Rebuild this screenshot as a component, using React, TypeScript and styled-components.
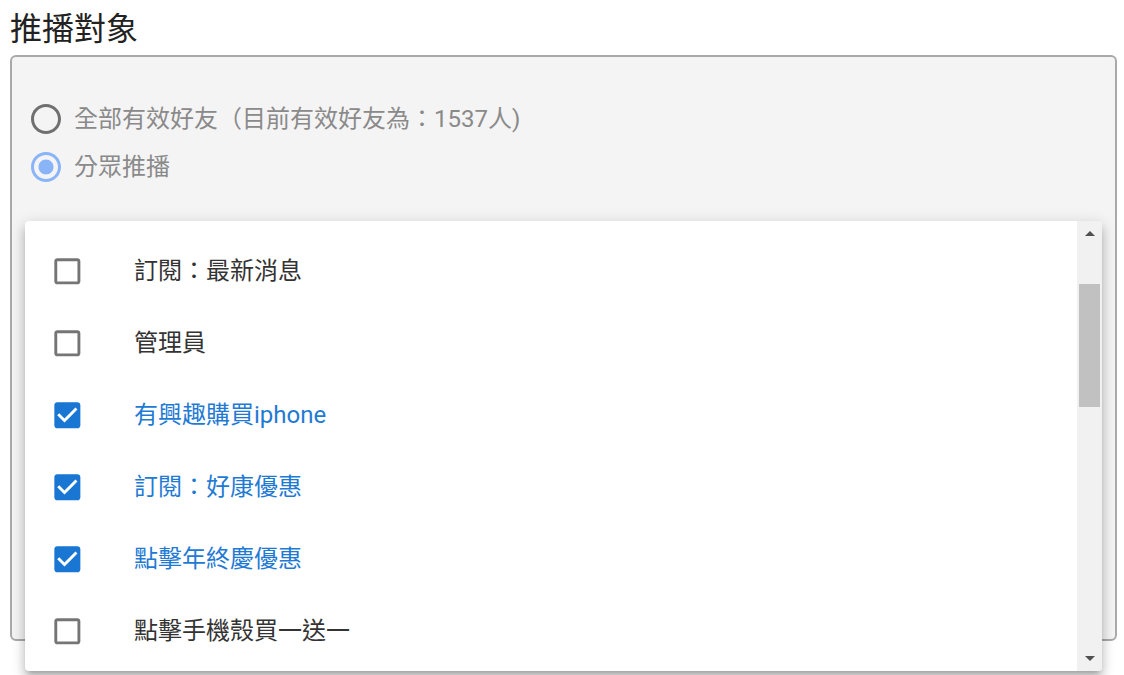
import React from "react";
import styled, { createGlobalStyle } from "styled-components";

const GlobalStyle = createGlobalStyle`
  html, body {
    margin: 0;
    padding: 0;
    background: #ffffff;
    font-family: Roboto, "Noto Sans CJK TC", sans-serif;
  }
`;

interface Group {
  id: string;
  label: string;
  checked: boolean;
}

const groups: Group[] = [
  { id: "news", label: "訂閱：最新消息", checked: false },
  { id: "admin", label: "管理員", checked: false },
  { id: "iphone", label: "有興趣購買iphone", checked: true },
  { id: "deal", label: "訂閱：好康優惠", checked: true },
  { id: "yearend", label: "點擊年終慶優惠", checked: true },
  { id: "case", label: "點擊手機殼買一送一", checked: false },
];

const CheckIcon: React.FC<{ checked: boolean }> = ({ checked }) => (
  <svg width="34.7" height="34.7" viewBox="0 0 24 24">
    {checked ? (
      <path
        fill="#1976d2"
        d="M19 3H5c-1.11 0-2 .9-2 2v14c0 1.1.89 2 2 2h14c1.11 0 2-.9 2-2V5c0-1.1-.89-2-2-2zm-9 14l-5-5 1.41-1.41L10 14.17l7.59-7.59L19 8l-7 7z"
      />
    ) : (
      <path
        fill="#757575"
        d="M19 5v14H5V5h14m0-2H5c-1.1 0-2 .9-2 2v14c0 1.1.9 2 2 2h14c1.1 0 2-.9 2-2V5c0-1.1-.9-2-2-2z"
      />
    )}
  </svg>
);

const RadioIcon: React.FC<{ checked: boolean }> = ({ checked }) => (
  <svg width="36" height="36" viewBox="0 0 24 24">
    <path
      fill={checked ? "#8ab4f8" : "#707070"}
      d="M12 2C6.48 2 2 6.48 2 12s4.48 10 10 10 10-4.48 10-10S17.52 2 12 2zm0 18c-4.42 0-8-3.58-8-8s3.58-8 8-8 8 3.58 8 8-3.58 8-8 8z"
    />
    {checked && (
      <path
        fill="#8ab4f8"
        d="M12 7c-2.76 0-5 2.24-5 5s2.24 5 5 5 5-2.24 5-5-2.24-5-5-5z"
      />
    )}
  </svg>
);

export default function App() {
  return (
    <Page>
      <GlobalStyle />
      <Title>推播對象</Title>
      <Panel>
        <RadioGroup>
          <RadioRow>
            <RadioIcon checked={false} />
            <RadioLabel>全部有效好友（目前有效好友為：1537人)</RadioLabel>
          </RadioRow>
          <RadioRow>
            <RadioIcon checked />
            <RadioLabel>分眾推播</RadioLabel>
          </RadioRow>
        </RadioGroup>
        <Menu>
          <MenuList>
            {groups.map((g) => (
              <MenuItem key={g.id}>
                <CheckBox>
                  <CheckIcon checked={g.checked} />
                </CheckBox>
                <ItemText $checked={g.checked}>{g.label}</ItemText>
              </MenuItem>
            ))}
          </MenuList>
          <ScrollBar>
            <ScrollArrow>
              <ArrowUp />
            </ScrollArrow>
            <ScrollTrack>
              <ScrollThumb />
            </ScrollTrack>
            <ScrollArrow>
              <ArrowDown />
            </ScrollArrow>
          </ScrollBar>
        </Menu>
      </Panel>
    </Page>
  );
}

const Page = styled.div`
  width: 1124px;
  height: 675px;
  overflow: hidden;
  padding: 6px 7px 0 10px;
  box-sizing: border-box;
`;

const Title = styled.h2`
  margin: 0 0 8px;
  font-family: "Noto Sans CJK TC", sans-serif;
  font-size: 32px;
  font-weight: 400;
  line-height: 41px;
  color: #222222;
`;

const Panel = styled.div`
  position: relative;
  height: 586px;
  box-sizing: border-box;
  background: #f4f4f4;
  border: 2px solid #a9a9a9;
  border-radius: 6px;
  padding: 38px 0 0 16px;
`;

const RadioGroup = styled.div`
  display: flex;
  flex-direction: column;
`;

const RadioRow = styled.label`
  display: flex;
  align-items: center;
  height: 48px;
  gap: 10px;
`;

const RadioLabel = styled.span`
  font-size: 24px;
  color: #8a8a8a;
  line-height: 1;
`;

const Menu = styled.div`
  position: absolute;
  left: 13px;
  top: 164px;
  width: 1077px;
  height: 450px;
  background: #ffffff;
  border-radius: 4px;
  display: flex;
  overflow: hidden;
  box-shadow: 0 5px 5px -3px rgba(0, 0, 0, 0.2),
    0 8px 10px 1px rgba(0, 0, 0, 0.14), 0 3px 14px 2px rgba(0, 0, 0, 0.12);
`;

const MenuList = styled.ul`
  flex: 1;
  list-style: none;
  margin: 0;
  padding: 14px 0 0;
`;

const MenuItem = styled.li`
  display: flex;
  align-items: center;
  height: 72px;
  padding-left: 25px;
`;

const CheckBox = styled.span`
  display: flex;
  align-items: center;
  justify-content: center;
  width: 35px;
  height: 35px;
`;

const ItemText = styled.span<{ $checked: boolean }>`
  margin-left: 49px;
  font-size: 24px;
  line-height: 1;
  color: ${(p) => (p.$checked ? "#1f7ad4" : "#333333")};
`;

const ScrollBar = styled.div`
  width: 25px;
  background: #f1f1f1;
  display: flex;
  flex-direction: column;
`;

const ScrollArrow = styled.div`
  height: 25px;
  display: flex;
  align-items: center;
  justify-content: center;
`;

const ArrowUp = styled.span`
  width: 0;
  height: 0;
  border-left: 5px solid transparent;
  border-right: 5px solid transparent;
  border-bottom: 5px solid #505050;
`;

const ArrowDown = styled(ArrowUp)`
  border-bottom: none;
  border-top: 5px solid #505050;
`;

const ScrollTrack = styled.div`
  flex: 1;
  padding: 38px 2px 0;
`;

const ScrollThumb = styled.div`
  height: 123px;
  background: #c1c1c1;
`;
